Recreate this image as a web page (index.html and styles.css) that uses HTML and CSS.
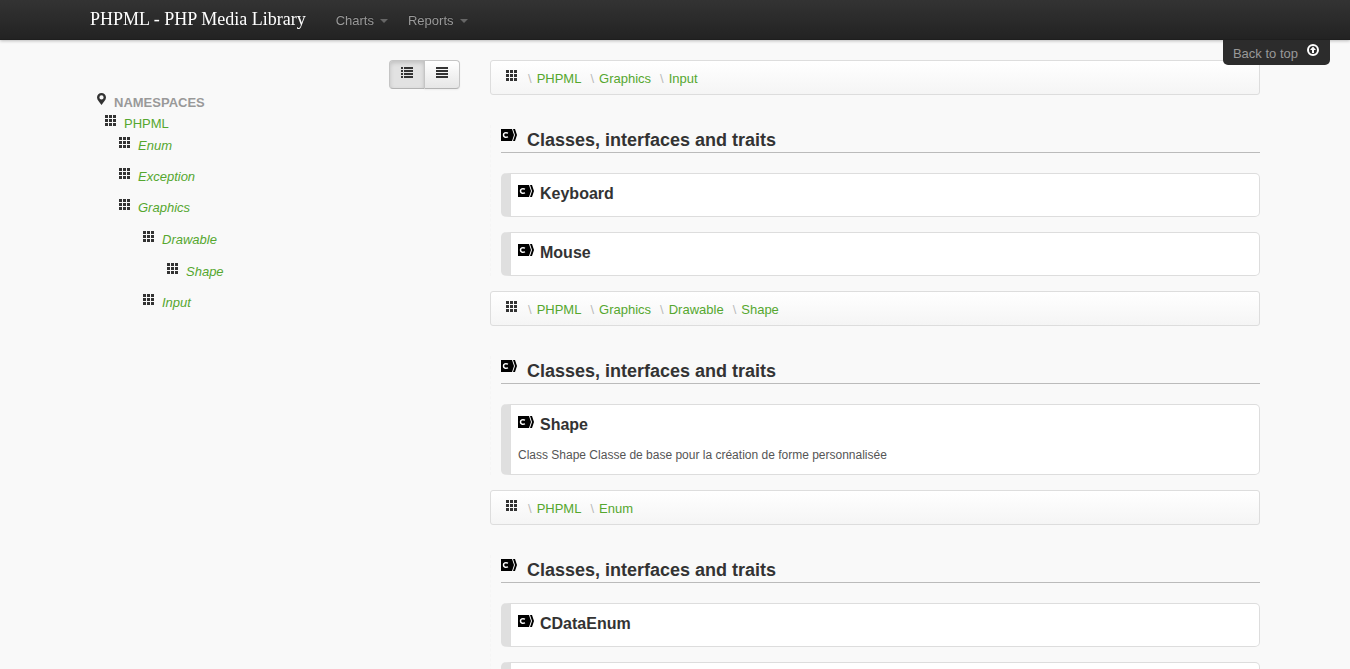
FILE: index.html
```html
<!DOCTYPE html>
<html lang="en">
<head>
<meta charset="utf-8">
<title>PHPML - PHP Media Library</title>
<link rel="stylesheet" href="styles.css">
</head>
<body id="top">
<svg class="sprites" aria-hidden="true">
  <symbol id="grid" viewBox="0 0 11 11"><path fill="#333" d="M0 0h3v3H0zM4 0h3v3H4zM8 0h3v3H8zM0 4h3v3H0zM4 4h3v3H4zM8 4h3v3H8zM0 8h3v3H0zM4 8h3v3H4zM8 8h3v3H8z"/></symbol>
  <symbol id="class" viewBox="0 0 16 12"><path fill="#000" d="M0 0h11l2 6-2 6H0zM12 0h2l2 6-2 6h-2l2-6z"/><path fill="none" stroke="#fff" stroke-width="1.500" d="M7 4.100C4.500 3.200 2.500 3.900 2.500 6S4.500 8.800 7 7.900"/></symbol>
</svg>
<header class="navbar">
  <div class="container nav-inner">
    <a class="brand" href="#top">PHPML - PHP Media Library</a>
    <nav class="menu">
      <button class="menu-item" type="button">Charts<span class="caret"></span></button>
      <button class="menu-item" type="button">Reports<span class="caret"></span></button>
    </nav>
  </div>
  <a class="back-top" href="#top">Back to top
    <svg width="12" height="12" viewBox="0 0 12 12"><circle cx="6" cy="6" r="5" fill="none" stroke="#fff" stroke-width="2"/><path fill="#fff" d="M6 2.500 9 6H7v3H5V6H3z"/></svg>
  </a>
</header>
<main class="container page">
  <aside class="sidebar">
    <div class="view-buttons">
      <button class="btn active" type="button" aria-label="Detailed view"><svg width="12" height="11"><path fill="#333" d="M0 0h2v2H0zM3 0h9v2H3zM0 3h2v2H0zM3 3h9v2H3zM0 6h2v2H0zM3 6h9v2H3zM0 9h2v2H0zM3 9h9v2H3z"/></svg></button>
      <button class="btn" type="button" aria-label="Simple view"><svg width="12" height="11"><path fill="#333" d="M0 0h12v2H0zM0 3h12v2H0zM0 6h12v2H0zM0 9h12v2H0z"/></svg></button>
    </div>
    <h3 class="side-title"><svg width="9" height="12" viewBox="0 0 9 12"><path fill="#333" fill-rule="evenodd" d="M4.500 0A4.500 4.500 0 0 0 0 4.500C0 7 3 9.500 4.500 12 6 9.500 9 7 9 4.500A4.500 4.500 0 0 0 4.500 0zm0 2.300a2.100 2.100 0 1 1 0 4.200 2.100 2.100 0 0 1 0-4.200z"/></svg>Namespaces</h3>
    <div class="root"><svg class="grid"><use href="#grid"/></svg><a href="#top">PHPML</a></div>
    <ul class="tree">
      <li><svg class="grid"><use href="#grid"/></svg><a href="#enum">Enum</a></li>
      <li><svg class="grid"><use href="#grid"/></svg><a href="#top">Exception</a></li>
      <li><svg class="grid"><use href="#grid"/></svg><a href="#top">Graphics</a>
        <ul>
          <li><svg class="grid"><use href="#grid"/></svg><a href="#shape">Drawable</a>
            <ul><li><svg class="grid"><use href="#grid"/></svg><a href="#shape">Shape</a></li></ul>
          </li>
          <li><svg class="grid"><use href="#grid"/></svg><a href="#input">Input</a></li>
        </ul>
      </li>
    </ul>
  </aside>
  <div class="content">
    <nav class="breadcrumb" id="input"><svg class="grid"><use href="#grid"/></svg><span>\</span><a href="#top">PHPML</a><span>\</span><a href="#top">Graphics</a><span>\</span><a href="#input">Input</a></nav>
    <section class="package">
      <h2><svg class="class-icon"><use href="#class"/></svg>Classes, interfaces and traits</h2>
      <article class="card"><h3><svg class="class-icon"><use href="#class"/></svg>Keyboard</h3></article>
      <article class="card"><h3><svg class="class-icon"><use href="#class"/></svg>Mouse</h3></article>
    </section>
    <nav class="breadcrumb" id="shape"><svg class="grid"><use href="#grid"/></svg><span>\</span><a href="#top">PHPML</a><span>\</span><a href="#top">Graphics</a><span>\</span><a href="#shape">Drawable</a><span>\</span><a href="#shape">Shape</a></nav>
    <section class="package">
      <h2><svg class="class-icon"><use href="#class"/></svg>Classes, interfaces and traits</h2>
      <article class="card"><h3><svg class="class-icon"><use href="#class"/></svg>Shape</h3><p>Class Shape Classe de base pour la création de forme personnalisée</p></article>
    </section>
    <nav class="breadcrumb" id="enum"><svg class="grid"><use href="#grid"/></svg><span>\</span><a href="#top">PHPML</a><span>\</span><a href="#enum">Enum</a></nav>
    <section class="package">
      <h2><svg class="class-icon"><use href="#class"/></svg>Classes, interfaces and traits</h2>
      <article class="card"><h3><svg class="class-icon"><use href="#class"/></svg>CDataEnum</h3></article>
      <article class="card"></article>
    </section>
  </div>
</main>
</body>
</html>
```
FILE: styles.css
```css
* { box-sizing: border-box; }
body {
  margin: 0;
  padding-top: 60px;
  background: #f9f9f9;
  color: #333;
  font: 13px/20px "Liberation Sans", Arial, sans-serif;
}
a { color: #55a72f; text-decoration: none; }
h2, h3, p, ul { margin: 0; padding: 0; }
ul { list-style: none; }
button { font: inherit; cursor: pointer; }
svg { flex: none; }
.sprites { position: absolute; width: 0; height: 0; }
.container { max-width: 1170px; margin: 0 auto; }

.navbar {
  position: fixed;
  top: 0;
  left: 0;
  right: 0;
  z-index: 10;
  background: linear-gradient(#333, #222);
  box-shadow: 0 1px 3px rgba(0, 0, 0, .25), inset 0 -1px 0 rgba(0, 0, 0, .1);
}
.nav-inner { display: flex; height: 40px; }
.brand {
  padding: 9px 20px 11px 0;
  color: #fff;
  font: 18px/20px "Liberation Serif", serif;
}
.menu { display: flex; }
.menu-item {
  display: flex;
  align-items: center;
  gap: 6px;
  padding: 2px 10px 0;
  border: 0;
  background: none;
  color: #999;
  text-shadow: 0 -1px 0 rgba(0, 0, 0, .25);
}
.caret {
  border: 4px solid transparent;
  border-top-color: #666;
  border-bottom: 0;
}
.back-top {
  position: absolute;
  top: 40px;
  right: 20px;
  display: flex;
  gap: 9px;
  padding: 4px 11px 1px 10px;
  border-radius: 0 0 5px 5px;
  background: #2c2c2c;
  color: #999;
}

.page { display: grid; grid-template-columns: 370fr 770fr; gap: 30px; }
.view-buttons { display: flex; justify-content: flex-end; }
.btn {
  display: flex;
  justify-content: center;
  width: 36px;
  height: 29px;
  padding: 6px 0;
  border: 1px solid #c5c5c5;
  border-bottom-color: #b3b3b3;
  border-radius: 0 4px 4px 0;
  background: linear-gradient(#fff, #e6e6e6);
  box-shadow: 0 1px 2px rgba(0, 0, 0, .05);
}
.btn.active {
  width: 35px;
  border-right: 0;
  border-radius: 4px 0 0 4px;
  background: #e2e2e2;
  box-shadow: inset 0 2px 4px rgba(0, 0, 0, .15);
}
.side-title {
  display: flex;
  gap: 8px;
  padding: 4px 7px 0;
  color: #999;
  font-size: 13px;
  text-transform: uppercase;
}
.grid { width: 11px; height: 11px; }
.root { display: flex; gap: 8px; padding-left: 15px; margin-top: 1px; }
.root .grid { margin-top: 1px; }
.tree { margin: 2px 0 0 29px; font-style: italic; }
.tree li + li { margin-top: 11px; }
.tree .grid { float: left; margin: 1px 8px 0 0; }
.tree a { display: block; }
.tree ul { margin: 12px 0 0 24px; }

.breadcrumb {
  display: flex;
  align-items: flex-start;
  padding: 8px 15px 5px;
  border: 1px solid #ddd;
  border-radius: 3px;
  background: linear-gradient(#fff, #f5f5f5);
}
.breadcrumb .grid { margin: 1px 6px 0 0; }
.breadcrumb span { padding: 0 5px; color: #bbb; }
.breadcrumb a { margin-right: 4px; }
.package {
  margin: 30px 0 15px;
  padding-left: 10px;
  border-left: 1px dashed #f5f5f5;
}
.package h2 {
  display: flex;
  gap: 10px;
  padding-top: 4px;
  border-bottom: 1px solid #bbb;
  font-size: 18px;
  line-height: 23px;
}
.class-icon { width: 16px; height: 12px; }
.card {
  min-height: 44px;
  margin-top: 15px;
  padding: 10px 7px 8px;
  border: 1px solid #ddd;
  border-left: 10px solid #dfdfdf;
  border-radius: 5px;
  background: #fff;
}
h2 + .card { margin-top: 20px; }
.card h3 { display: flex; gap: 6px; font-size: 16px; line-height: 20px; }
.card .class-icon { margin-top: 1px; }
.card p { padding: 10px 0 1px; color: #555; font-size: 12px; line-height: 20px; }
```
